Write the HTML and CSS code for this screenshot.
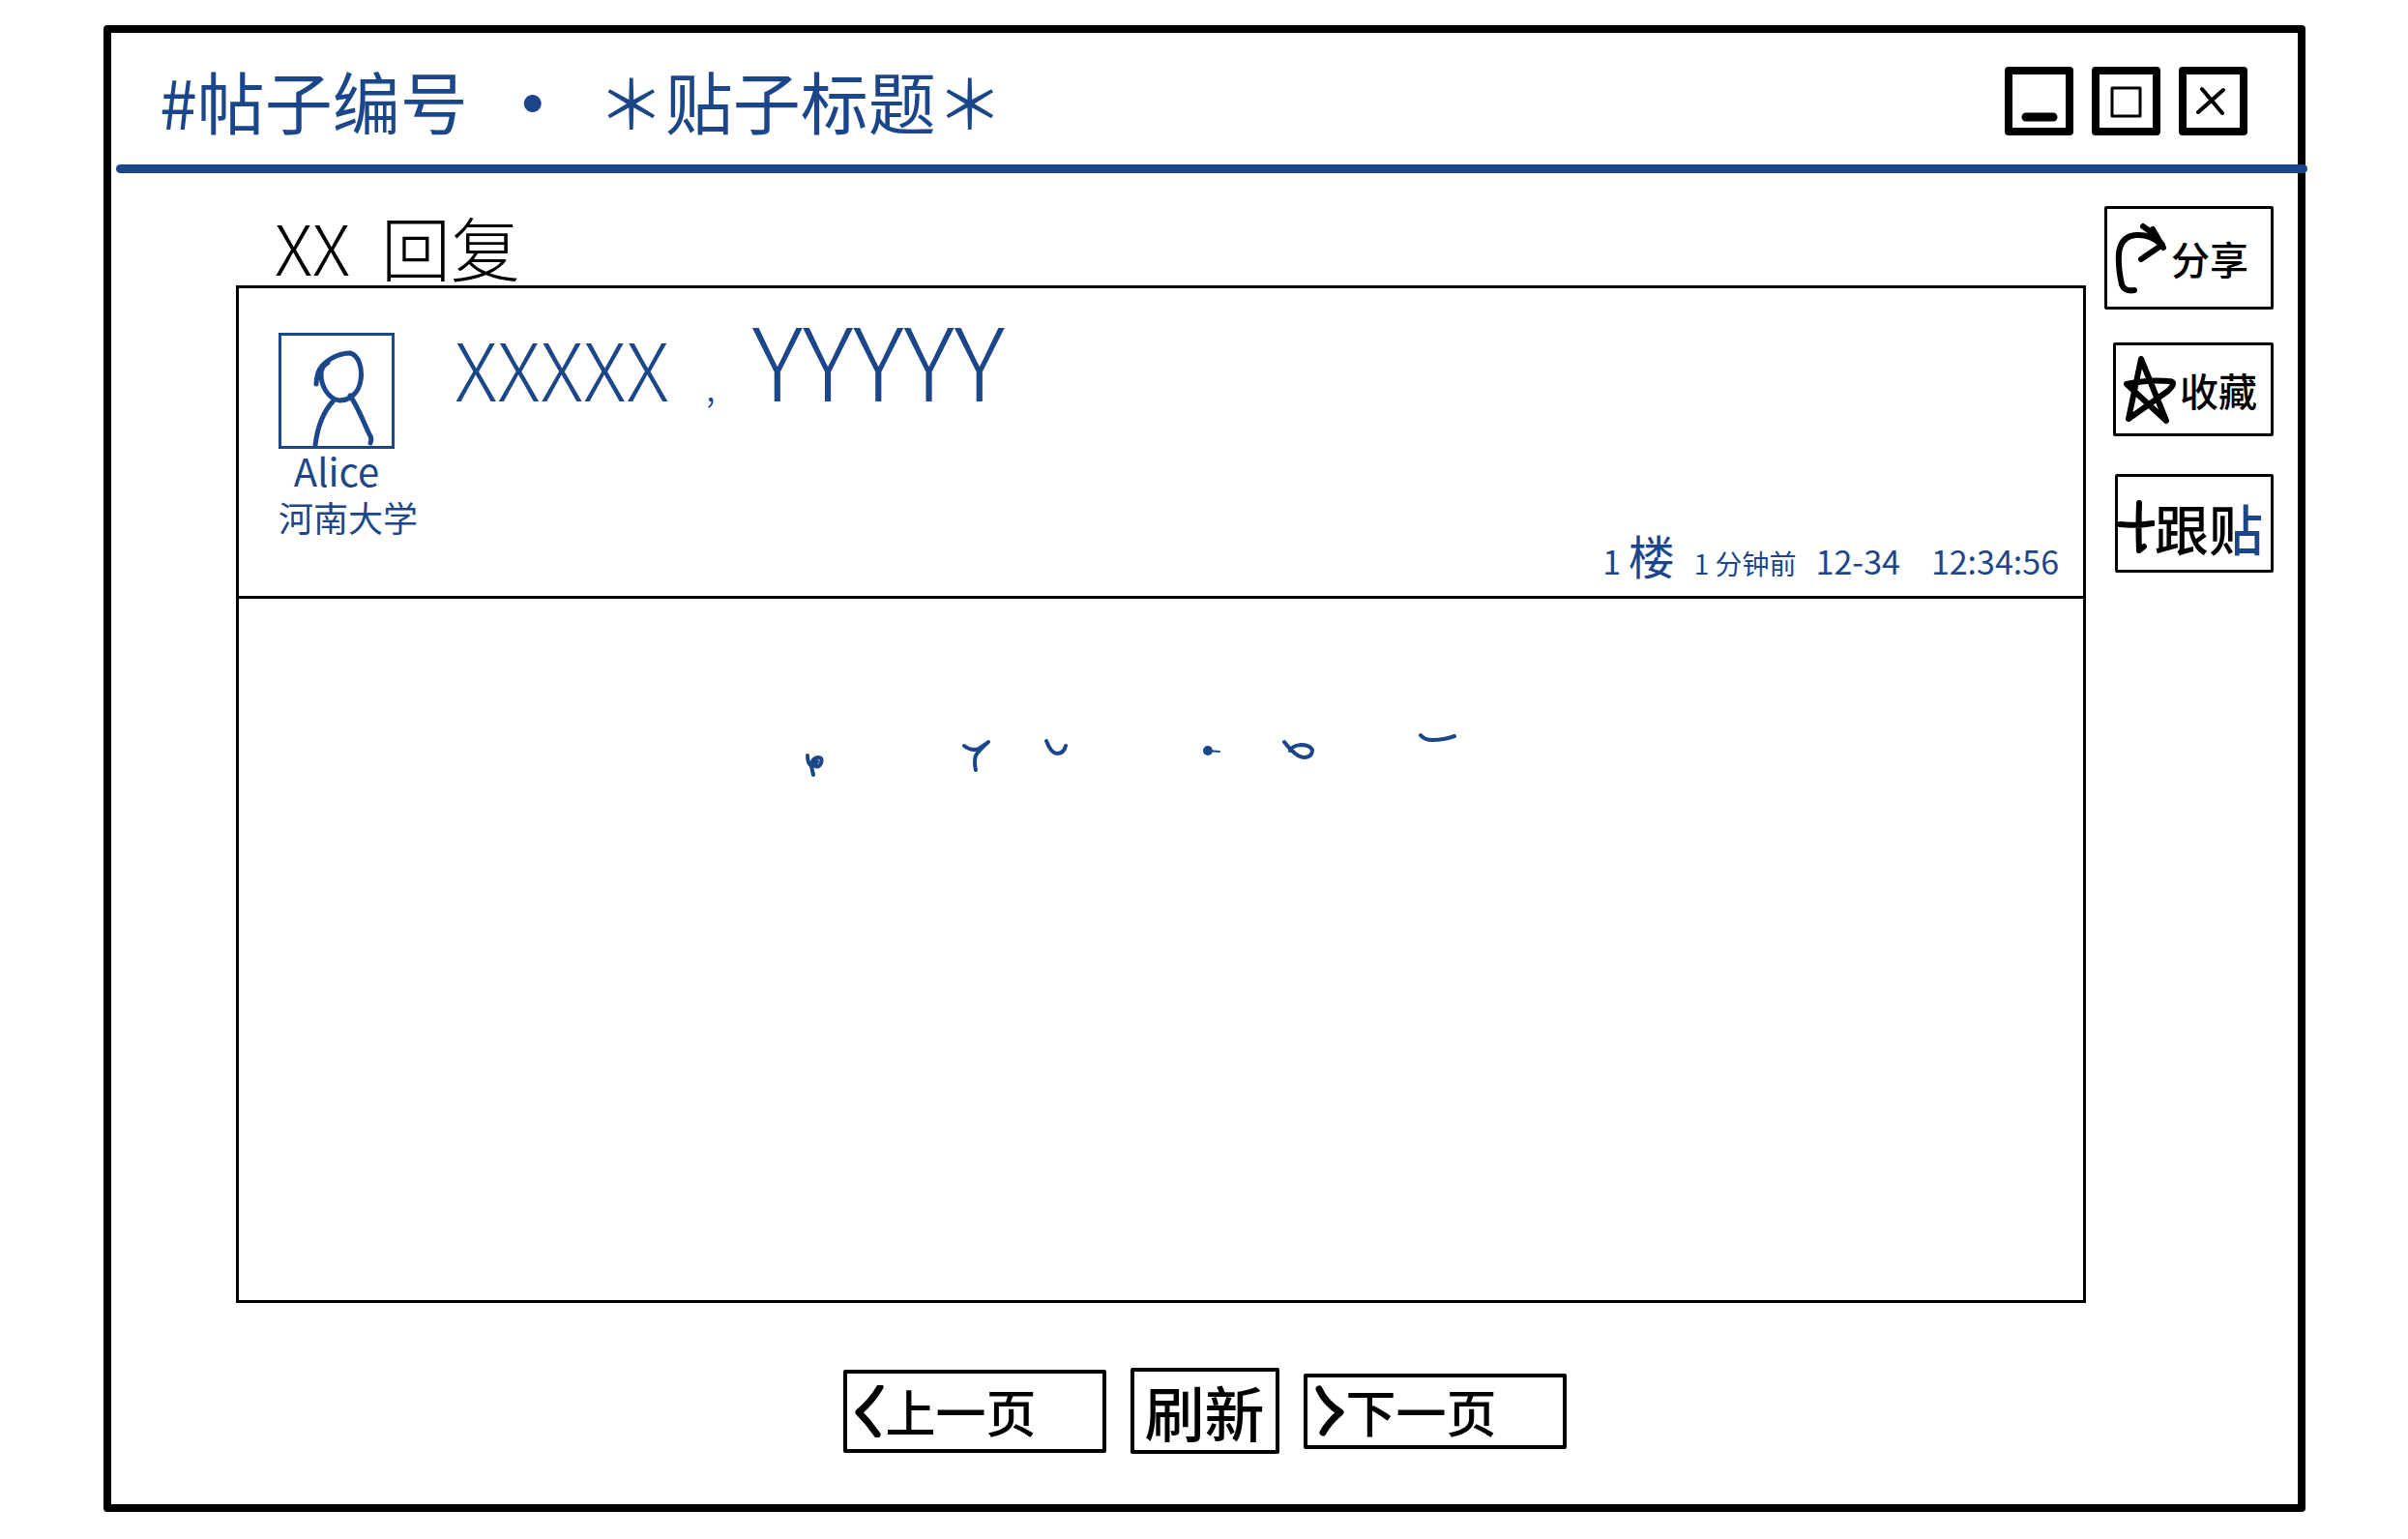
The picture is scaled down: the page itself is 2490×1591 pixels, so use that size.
FILE: index.html
```html
<!DOCTYPE html>
<html lang="zh-CN">
<head>
<meta charset="utf-8">
<title>帖子</title>
<link rel="stylesheet" href="styles.css">
</head>
<body>
<div class="window">
  <header class="titlebar">
    <h1 class="title"><span>#帖子编号</span><span class="dot">·</span><span>＊贴子标题＊</span></h1>
    <div class="controls">
      <button class="control" aria-label="最小化"><svg viewBox="0 0 55 55"><path d="M14 44H42" stroke-width="9"/></svg></button>
      <button class="control" aria-label="最大化"><svg viewBox="0 0 55 55"><rect x="13" y="14" width="29" height="29" stroke-width="3"/></svg></button>
      <button class="control" aria-label="关闭"><svg viewBox="0 0 55 55"><path d="M16 15L37 40M38 16L12 39" stroke-width="4"/></svg></button>
    </div>
  </header>
  <hr class="rule">
  <main class="content">
    <section class="thread">
      <h2 class="replies"><span>XX</span><span>回复</span></h2>
      <div class="panel">
        <article class="post">
          <div class="author">
            <svg class="avatar" viewBox="0 0 114 114"><path d="M36 50Q36 44 38 38C42 27 58 18 71 18C80 20 84 34 82 46C80 60 70 67 60 67C48 65 41 52 41 40C41 34 44 30 48 28M54 67C42 80 37 96 35 113M71 62C80 75 84 88 91 102Q94 106 92 111"/></svg>
            <span class="name">Alice</span>
            <span class="school">河南大学</span>
          </div>
          <div class="body">
            <p class="message"><span>XXXXX</span><span class="comma">,</span><span class="large">YYYYY</span></p>
            <footer class="meta">
              <span class="floor">1 <b>楼</b></span>
              <span class="ago">1 分钟前</span>
              <span>12-34</span>
              <time>12:34:56</time>
            </footer>
          </div>
        </article>
        <div class="more">
          <svg class="marks" viewBox="0 0 680 56"><path d="M4 31Q4 39 8 42L10 51M8 42Q9 33 15 33Q20 33 18 39Q15 45 11 41L14 37M166 21Q174 27 181 24Q187 20 191 17Q181 26 178 31Q176 38 178 46M251 16Q256 29 262 29Q269 29 271 21M497 17Q510 34 519 33Q526 32 526 25Q523 20 514 20Q505 21 503 26M638 10Q642 15 650 15Q662 15 673 11"/><path d="M417 26L430 27" stroke-width="2"/><circle cx="418" cy="26" r="5"/></svg>
        </div>
      </div>
    </section>
    <aside class="actions">
      <button class="action share"><svg viewBox="0 0 54 74"><path d="M20 70Q10 72 7 64Q3 46 4 32Q6 14 22 13Q36 12 47 22M29 4Q40 11 49 23L27 38M39 7L50 26"/></svg>分享</button>
      <button class="action collect"><svg viewBox="0 0 54 74"><path d="M18 5L5 67L46 38Q56 28 46 28Q26 26 3 31L44 69Z"/></svg>收藏</button>
      <button class="action follow"><svg viewBox="0 0 38 58"><path d="M22 4Q21 30 22 53L27 49M2 26Q18 28 36 25"/></svg>跟<span class="two-tone">贴</span></button>
    </aside>
  </main>
  <nav class="pager">
    <button class="page prev"><svg viewBox="0 0 30 54"><path d="M26 2Q18 16 4 28Q14 38 23 51"/></svg>上一页</button>
    <button class="page refresh">刷新</button>
    <button class="page next"><svg viewBox="0 0 30 54"><path d="M4 4Q10 18 26 28Q14 38 8 49"/></svg>下一页</button>
  </nav>
</div>
</body>
</html>
```
FILE: styles.css
```css
:root { --ink: #000; --blue: #1c468a; }
* { box-sizing: border-box; }
body {
  margin: 0;
  padding: 26px 106px 28px 107px;
  min-height: 100vh;
  display: flex;
  background: #fff;
  color: var(--ink);
  font-family: "Noto Sans CJK SC", sans-serif;
  font-weight: 400;
}
svg { fill: none; stroke: currentColor; stroke-linecap: round; stroke-linejoin: round; flex: none; }
button { margin: 0; background: none; color: inherit; font: inherit; }
.window { flex: 1; display: flex; flex-direction: column; border: 8px solid var(--ink); border-radius: 4px; }

.titlebar { display: flex; justify-content: space-between; align-items: center; height: 136px; padding: 4px 52px 0 50px; }
.title { display: flex; align-items: center; gap: 32px; margin: 0; color: var(--blue); font-size: 70px; font-weight: 400; line-height: 100px; white-space: nowrap; }
.dot { font-weight: 700; }
.controls { display: flex; gap: 19px; }
.control { width: 71px; height: 71px; padding: 0; border: 8px solid var(--ink); border-radius: 4px; }
.control svg { display: block; width: 55px; height: 55px; }
.rule { height: 9px; width: auto; margin: 0 -10px 0 5px; border: 0; border-radius: 5px; background: var(--blue); flex: none; position: relative; }

.content { flex: 1; display: grid; grid-template-columns: 1fr 175px; gap: 19px; padding: 34px 25px 0 129px; }
.thread { display: flex; flex-direction: column; }
.replies { display: flex; gap: 32px; margin: 0 0 0 40px; font-size: 72px; font-weight: 300; line-height: 82px; }
.panel { flex: 1; border: 3px solid var(--ink); }
.post { display: flex; gap: 36px; min-height: 321px; padding: 46px 25px 4px 41px; border-bottom: 3px solid var(--ink); color: var(--blue); }
.author { display: flex; flex-direction: column; align-items: flex-start; width: 146px; white-space: nowrap; }
.avatar { width: 120px; height: 120px; border: 3px solid var(--blue); stroke-width: 5; }
.name { width: 120px; text-align: center; font-size: 40px; line-height: 44px; }
.school { font-size: 36px; line-height: 52px; }
.body { flex: 1; display: flex; flex-direction: column; justify-content: space-between; }
.message { display: flex; align-items: baseline; gap: 38px; margin: -16px 0 0; font-size: 82px; font-weight: 300; line-height: 84px; }
.comma { font-size: 40px; }
.large { font-size: 104px; }
.meta { display: flex; justify-content: flex-end; align-items: baseline; gap: 20px; font-size: 34px; line-height: 60px; }
.meta time { margin-left: 12px; }
.floor b { font-size: 48px; font-weight: 400; }
.ago { font-size: 28px; }
.more { padding: 131px 0 0 584px; color: var(--blue); }
.marks { display: block; width: 680px; height: 56px; stroke-width: 4; }
.marks circle { fill: currentColor; stroke: none; }

.actions { display: flex; flex-direction: column; align-items: flex-end; }
.action { display: flex; align-items: center; border: 3px solid var(--ink); border-radius: 2px; padding: 0 0 0 8px; font-size: 40px; font-weight: 500; line-height: 60px; white-space: nowrap; }
.action svg { width: 54px; height: 74px; stroke-width: 6; margin-right: 4px; }
.share { width: 175px; height: 107px; }
.collect { width: 166px; height: 97px; margin-top: 34px; }
.follow { width: 164px; height: 102px; margin-top: 39px; padding: 8px 0 0; font-size: 56px; }
.follow svg { width: 38px; height: 58px; margin-right: 0; }
.two-tone { background: linear-gradient(90deg, var(--ink) 46%, var(--blue) 46%); background-clip: text; -webkit-background-clip: text; color: transparent; }

.pager { display: flex; justify-content: center; align-items: center; gap: 25px; padding: 67px 0 52px; }
.page { display: flex; align-items: center; border: 4px solid var(--ink); border-radius: 2px; padding: 0 0 0 8px; font-size: 52px; font-weight: 500; line-height: 70px; white-space: nowrap; }
.page svg { width: 30px; height: 54px; stroke-width: 7; margin-right: 2px; }
.prev { width: 272px; height: 86px; }
.refresh { width: 154px; height: 89px; justify-content: center; padding: 0; font-size: 62px; }
.next { width: 272px; height: 78px; }
```
